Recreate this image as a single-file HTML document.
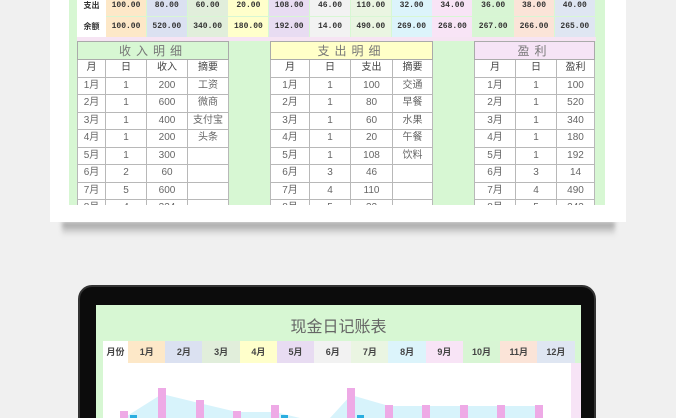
<!DOCTYPE html>
<html><head><meta charset="utf-8"><style>
*{margin:0;padding:0;box-sizing:border-box}
html,body{width:676px;height:418px;overflow:hidden}
body{background:#f0f0f0;position:relative;font-family:"Liberation Sans","Noto Sans CJK SC",sans-serif}
.abs{position:absolute}
.shadow{left:62px;top:222px;width:553px;height:14px;background:linear-gradient(#9a9a9a,#d8d8d8 70%,#efefef);filter:blur(2px)}
.card{left:50px;top:0;width:576px;height:222px;background:#fff}
.green{left:69px;top:0;width:536px;height:205px;background:#d7f7d3;overflow:hidden}
.top div{position:absolute;font-size:8px;font-weight:bold;color:#333;text-align:center;font-family:"Liberation Mono","Noto Sans CJK SC",monospace}
table{position:absolute;border-collapse:collapse;font-size:10px;color:#666;background:#fff}
td{border:1px solid #b8b8b8;text-align:center;height:17.5px;padding:0;line-height:16px}
th{border:1px solid #aaa;font-weight:normal;height:17px;font-size:12px;letter-spacing:5px;color:#777}
tr.h td{color:#444}
.lap{left:78px;top:285px;width:518px;height:150px;background:#0c0c0c;border-radius:14px;border:2px solid #333}
.scr{left:96px;top:305px;width:485px;height:120px;background:#d7f7d3}
.mon div{position:absolute;top:341px;height:22px;line-height:22px;font-size:9px;font-weight:bold;color:#444;text-align:center}
</style></head><body>
<div class="abs shadow"></div>
<div class="abs card"></div>
<div class="abs green"></div>
<div class="top" id="top"></div>
<div class="abs" style="left:77px;top:37px;width:519px;height:4px;background:#f6e4f3"></div>

<table style="left:77px;top:41px;width:152px">
<tr><th colspan="4" style="background:#d7f7d3">收入明细</th></tr>
<tr class="h"><td style="width:28px">月</td><td style="width:41px">日</td><td style="width:41px">收入</td><td>摘要</td></tr>
<tr><td>1月</td><td>1</td><td>200</td><td>工资</td></tr>
<tr><td>2月</td><td>1</td><td>600</td><td>微商</td></tr>
<tr><td>3月</td><td>1</td><td>400</td><td>支付宝</td></tr>
<tr><td>4月</td><td>1</td><td>200</td><td>头条</td></tr>
<tr><td>5月</td><td>1</td><td>300</td><td></td></tr>
<tr><td>6月</td><td>2</td><td>60</td><td></td></tr>
<tr><td>7月</td><td>5</td><td>600</td><td></td></tr>
<tr><td>8月</td><td>4</td><td>334</td><td></td></tr>
</table>
<table style="left:270px;top:41px;width:163px">
<tr><th colspan="4" style="background:#ffffc8">支出明细</th></tr>
<tr class="h"><td style="width:39px">月</td><td style="width:41px">日</td><td style="width:42px">支出</td><td>摘要</td></tr>
<tr><td>1月</td><td>1</td><td>100</td><td>交通</td></tr>
<tr><td>2月</td><td>1</td><td>80</td><td>早餐</td></tr>
<tr><td>3月</td><td>1</td><td>60</td><td>水果</td></tr>
<tr><td>4月</td><td>1</td><td>20</td><td>午餐</td></tr>
<tr><td>5月</td><td>1</td><td>108</td><td>饮料</td></tr>
<tr><td>6月</td><td>3</td><td>46</td><td></td></tr>
<tr><td>7月</td><td>4</td><td>110</td><td></td></tr>
<tr><td>8月</td><td>5</td><td>32</td><td></td></tr>
</table>
<table style="left:474px;top:41px;width:121px">
<tr><th colspan="3" style="background:#f6e4f6">盈利</th></tr>
<tr class="h"><td style="width:41px">月</td><td style="width:41px">日</td><td>盈利</td></tr>
<tr><td>1月</td><td>1</td><td>100</td></tr>
<tr><td>2月</td><td>1</td><td>520</td></tr>
<tr><td>3月</td><td>1</td><td>340</td></tr>
<tr><td>4月</td><td>1</td><td>180</td></tr>
<tr><td>5月</td><td>1</td><td>192</td></tr>
<tr><td>6月</td><td>3</td><td>14</td></tr>
<tr><td>7月</td><td>4</td><td>490</td></tr>
<tr><td>8月</td><td>5</td><td>243</td></tr>
</table>
<div class="abs" style="left:69px;top:205px;width:536px;height:17px;background:#fff"></div>

<div class="abs lap"></div>
<div class="abs scr"></div>
<div class="abs" style="left:96px;top:313px;width:485px;text-align:center;font-size:16px;color:#666">现金日记账表</div>
<div class="mon" id="mon"></div>
<div class="abs" style="left:103px;top:363px;width:468px;height:60px;background:#fff"></div>
<div class="abs" style="left:571px;top:363px;width:10px;height:60px;background:#f7e4f6"></div>
<svg class="abs" style="left:0;top:0" width="676" height="418">
<polygon points="127,418 127,416 162,394 199,403 237,412 275,412 300,418" fill="#d7f3fb"/>
<polygon points="330,418 351,395 389,406 539,406 539,418" fill="#d7f3fb"/>
<g fill="#eeaae6">
<rect x="120" y="411" width="8" height="7"/><rect x="158" y="388" width="8" height="30"/><rect x="196" y="400" width="8" height="18"/><rect x="233" y="411" width="8" height="7"/><rect x="271" y="405" width="8" height="13"/><rect x="347" y="388" width="8" height="30"/><rect x="385" y="405" width="8" height="13"/><rect x="422" y="405" width="8" height="13"/><rect x="460" y="405" width="8" height="13"/><rect x="497" y="405" width="8" height="13"/><rect x="535" y="405" width="8" height="13"/>
</g>
<g fill="#2aaee0"><rect x="130" y="415" width="7" height="3"/><rect x="281" y="415" width="7" height="3"/><rect x="357" y="415" width="7" height="3"/></g>
</svg>
<script>
var c=["#fde8c8","#dbe1f1","#e1eedb","#ffffcb","#e8dcf2","#f2f2f2","#eaf5e2","#dcf4fb","#f8e4f6","#d8f5d4","#fbe4d8","#dfe6f2"];
var a=["100.00","80.00","60.00","20.00","108.00","46.00","110.00","32.00","34.00","36.00","38.00","40.00"];
var b=["100.00","520.00","340.00","180.00","192.00","14.00","490.00","269.00","268.00","267.00","266.00","265.00"];
var h='<div style="left:77px;top:0;width:29px;height:17px;line-height:12px;background:#fff;font-family:Liberation Sans,Noto Sans CJK SC">支出</div><div style="left:77px;top:17px;width:29px;height:20px;line-height:20px;background:#fff;font-family:Liberation Sans,Noto Sans CJK SC">余额</div>';
for(var i=0;i<12;i++){var x=106+i*40.8;
h+='<div style="left:'+x+'px;top:0;width:40px;height:16px;line-height:12px;background:'+c[i]+'">'+a[i]+'</div>';
h+='<div style="left:'+x+'px;top:17px;width:40px;height:20px;line-height:20px;background:'+c[i]+'">'+b[i]+'</div>';}
document.getElementById('top').innerHTML=h;
var m='<div style="left:103px;width:25px;background:#fff">月份</div>';
for(var i=0;i<12;i++){var x=128+i*37.2;m+='<div style="left:'+x+'px;width:37.5px;background:'+c[i]+'">'+(i+1)+'月</div>';}
document.getElementById('mon').innerHTML=m;
</script>
</body></html>
